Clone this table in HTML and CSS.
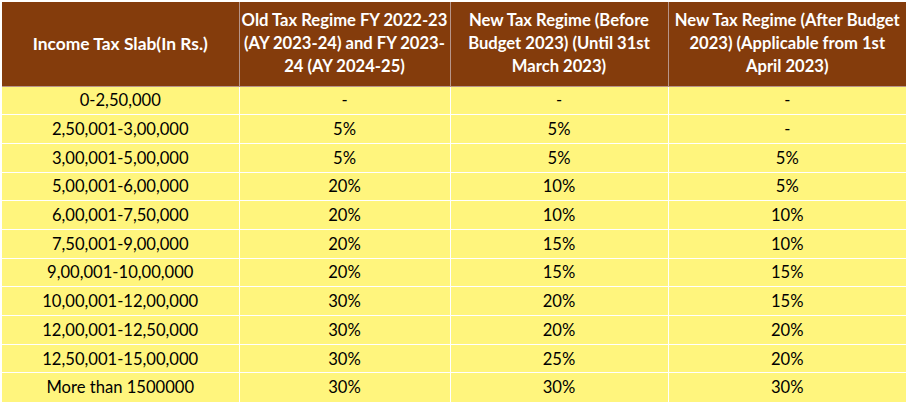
FILE: index.html
```html
<!DOCTYPE html>
<html>
<head>
<meta charset="utf-8">
<link rel="stylesheet" href="styles.css">
</head>
<body>
<table class="tax">
  <colgroup>
    <col class="c1"><col class="c2"><col class="c3"><col class="c4">
  </colgroup>
  <thead>
    <tr>
      <th>Income Tax Slab(In Rs.)</th>
      <th>Old Tax Regime FY 2022-23<br>(AY 2023-24) and FY 2023-<br>24 (AY 2024-25)</th>
      <th>New Tax Regime (Before<br>Budget 2023) (Until 31st<br>March 2023)</th>
      <th>New Tax Regime (After Budget<br>2023) (Applicable from 1st<br>April 2023)</th>
    </tr>
  </thead>
  <tbody>
    <tr><td>0-2,50,000</td><td>-</td><td>-</td><td>-</td></tr>
    <tr><td>2,50,001-3,00,000</td><td>5%</td><td>5%</td><td>-</td></tr>
    <tr><td>3,00,001-5,00,000</td><td>5%</td><td>5%</td><td>5%</td></tr>
    <tr><td>5,00,001-6,00,000</td><td>20%</td><td>10%</td><td>5%</td></tr>
    <tr><td>6,00,001-7,50,000</td><td>20%</td><td>10%</td><td>10%</td></tr>
    <tr><td>7,50,001-9,00,000</td><td>20%</td><td>15%</td><td>10%</td></tr>
    <tr><td>9,00,001-10,00,000</td><td>20%</td><td>15%</td><td>15%</td></tr>
    <tr><td>10,00,001-12,00,000</td><td>30%</td><td>20%</td><td>15%</td></tr>
    <tr><td>12,00,001-12,50,000</td><td>30%</td><td>20%</td><td>20%</td></tr>
    <tr><td>12,50,001-15,00,000</td><td>30%</td><td>25%</td><td>20%</td></tr>
    <tr><td>More than 1500000</td><td>30%</td><td>30%</td><td>30%</td></tr>
  </tbody>
</table>
</body>
</html>
```
FILE: styles.css
```css
html, body {
  margin: 0;
  padding: 0;
  background: #ffffff;
}
body {
  padding: 2px;
  font-family: Lato, "Liberation Sans", sans-serif;
}
.tax {
  border-collapse: collapse;
  table-layout: fixed;
  width: 904px;
}
.c1 { width: 237px; }
.c2 { width: 211px; }
.c3 { width: 218px; }
.c4 { width: 238px; }
.tax th {
  background: #843c0c;
  color: #ffffff;
  font-weight: bold;
  font-size: 16.6px;
  line-height: 23px;
  height: 84px;
  padding: 0;
  white-space: nowrap;
  text-align: center;
  vertical-align: middle;
  border-left: 1px solid #b7958a;
  border-bottom: 1px solid #b7958a;
  box-sizing: border-box;
}
.tax th:first-child {
  border-left: none;
  font-size: 17.4px;
}
.tax td {
  background: #fff57d;
  color: #000000;
  font-size: 16.6px;
  height: 28.7px;
  padding: 0;
  text-align: center;
  vertical-align: middle;
  border: 1px solid #ffffff;
  border-top: none;
  box-sizing: border-box;
}
.tax td:first-child { border-left: none; }
.tax td:last-child { border-right: none; }
.tax tr:last-child td { border-bottom: none; }
```
